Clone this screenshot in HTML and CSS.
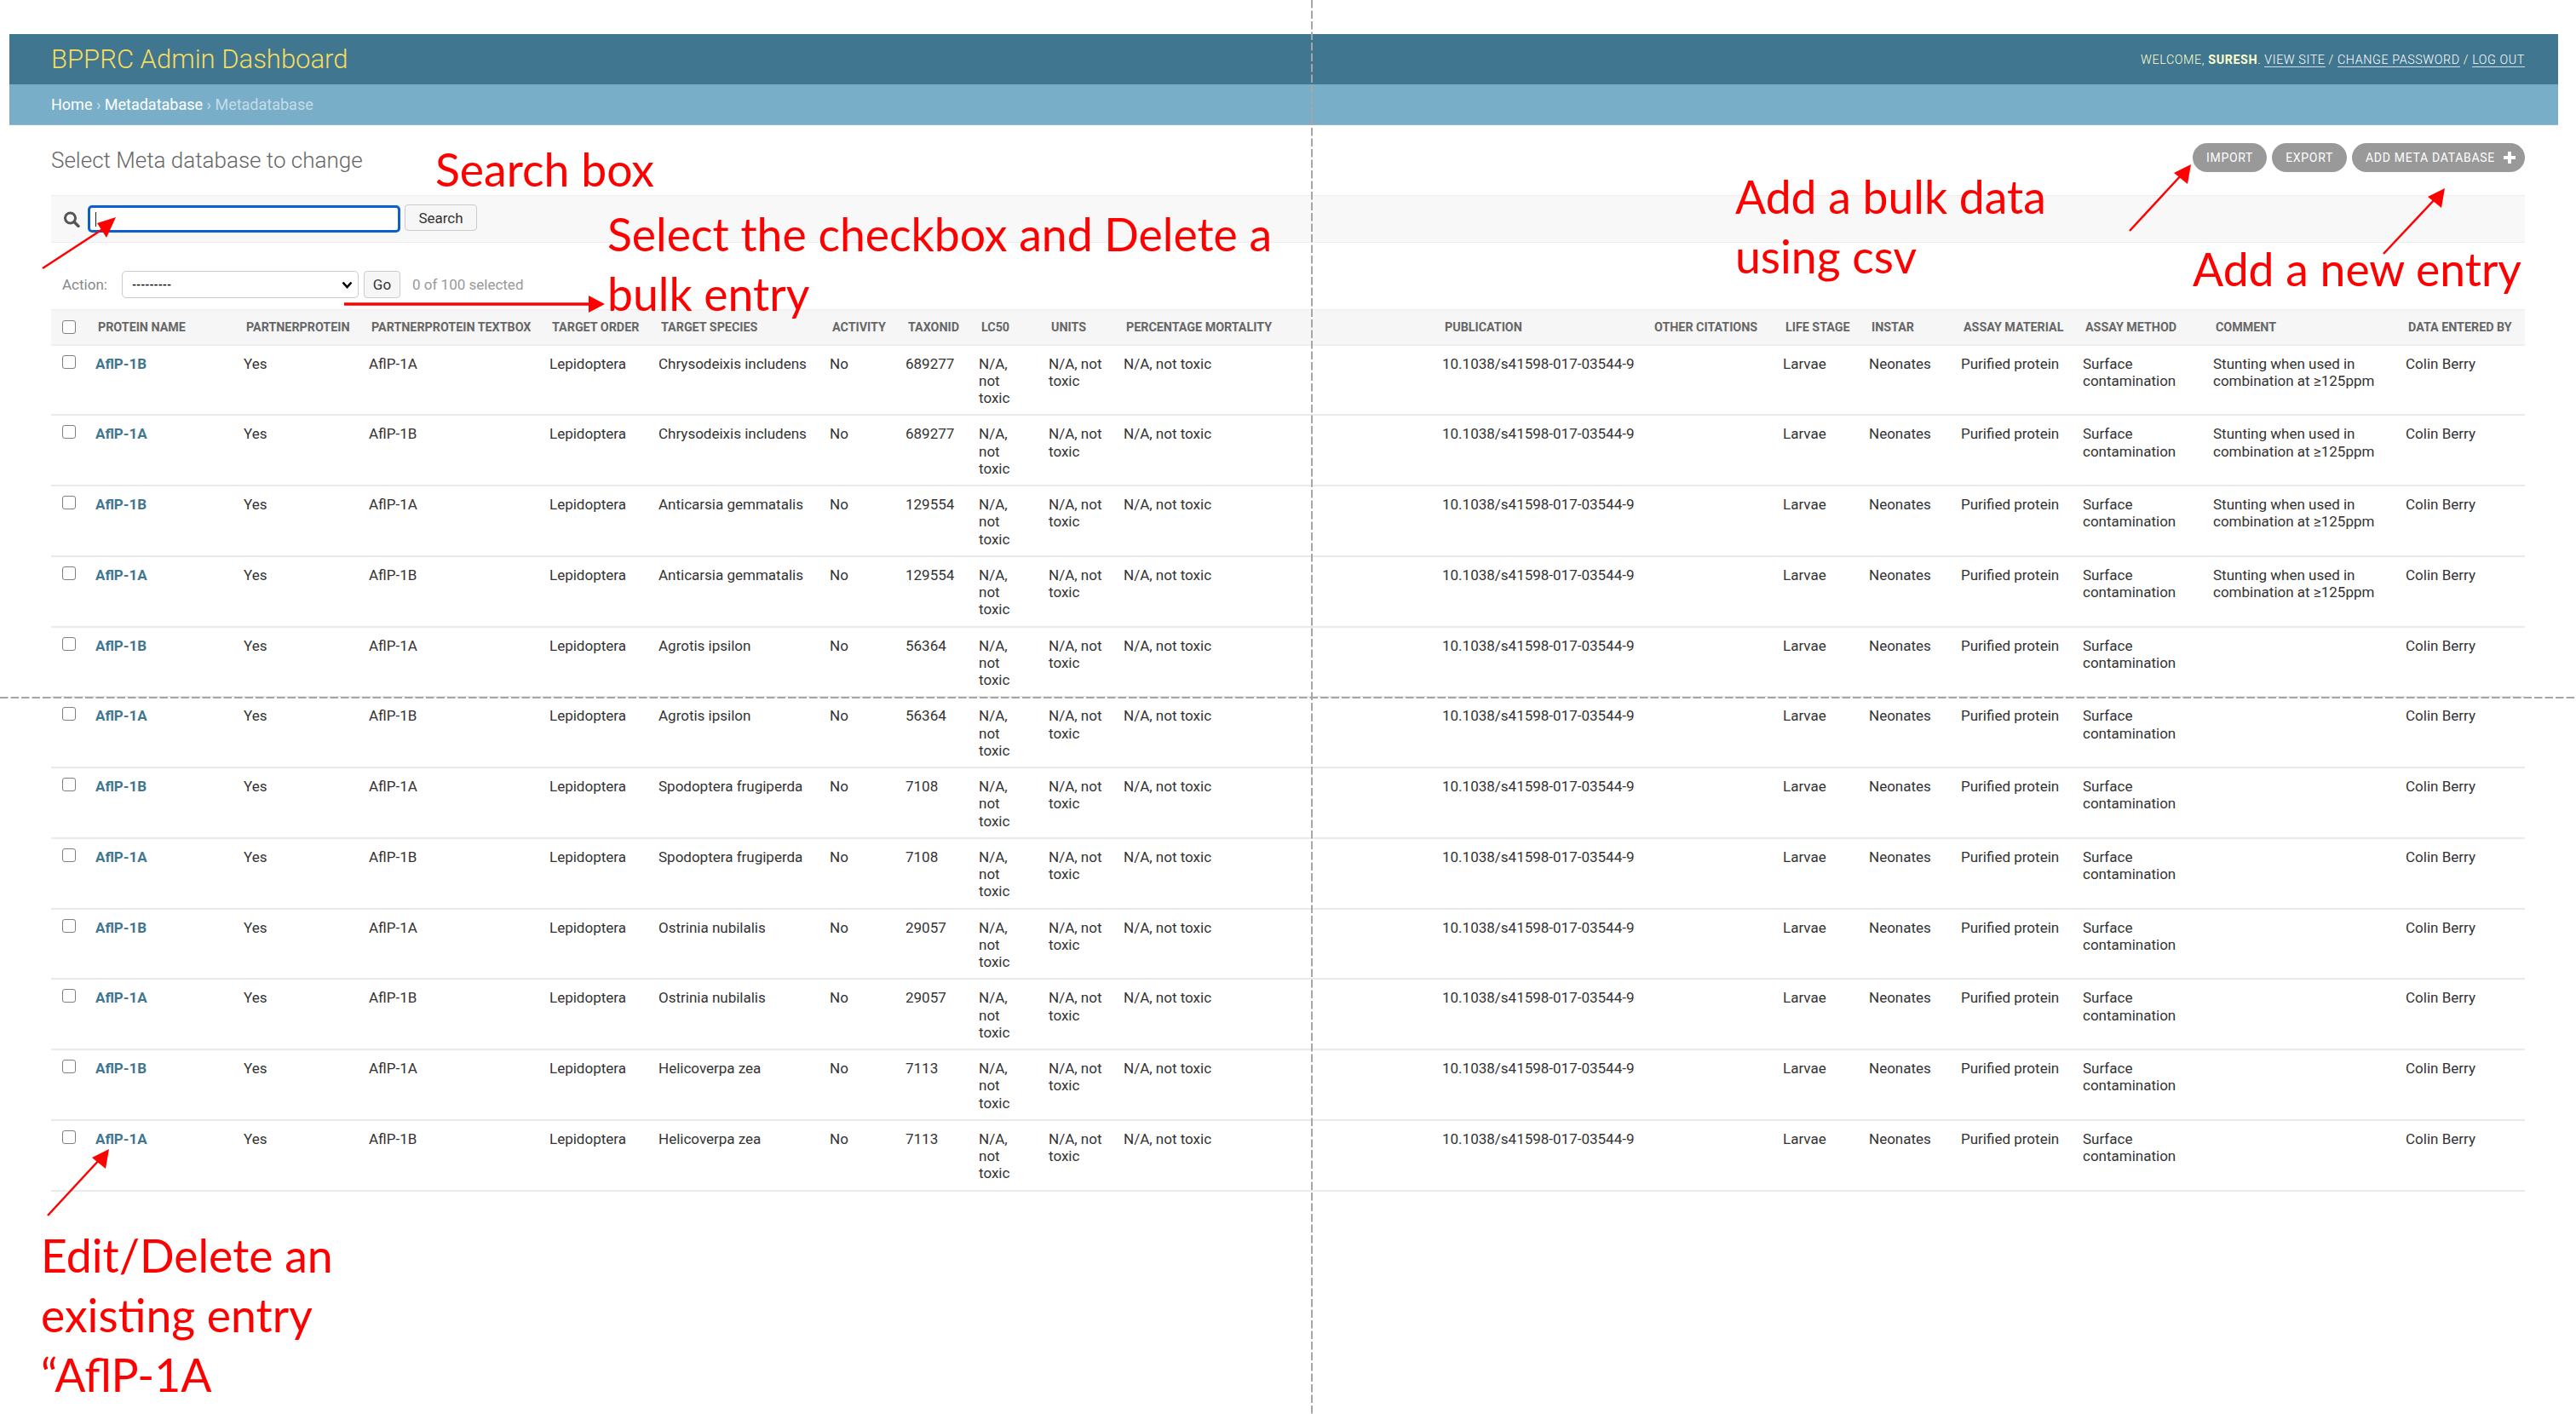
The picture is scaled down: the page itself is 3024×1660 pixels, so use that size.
FILE: index.html
```html
<!DOCTYPE html>
<html lang="en">
<head>
  <meta charset="UTF-8" />
  <title>Select Meta database to change | BPPRC Admin Dashboard</title>
  <link rel="stylesheet" href="styles.css">
</head>
<body>
  <div class="page">
    <div class="header">
      <div class="branding">BPPRC Admin Dashboard</div>
      <div class="user-tools">
        Welcome, <strong>Suresh</strong>. <a href="#">View site</a> / <a href="#">Change password</a> / <a href="#">Log out</a>
      </div>
    </div>
    <div class="breadcrumbs">
      <a href="#">Home</a> <span class="sep">›</span> <a href="#">Metadatabase</a> <span class="sep">›</span> Metadatabase
    </div>

    <div class="content">
      <div class="title-row">
        <h1>Select Meta database to change</h1>
        <ul class="object-tools">
          <li><a href="#">Import</a></li>
          <li><a href="#">Export</a></li>
          <li>
            <a href="#" class="addlink">Add meta database
              <svg class="plus" width="14" height="14" viewBox="0 0 14 14"><path d="M5 0h4v5h5v4H9v5H5V9H0V5h5z" fill="#fff"/></svg>
            </a>
          </li>
        </ul>
      </div>

      <div class="toolbar">
        <svg class="search-icon" width="20" height="19" viewBox="0 0 20 19">
          <circle cx="8.5" cy="8" r="6" fill="none" stroke="#555" stroke-width="3"/>
          <path d="M13 12.5l5 5" stroke="#555" stroke-width="3.4" stroke-linecap="round"/>
        </svg>
        <div class="search-input"><span class="caret"></span></div>
        <button class="btn search-btn">Search</button>
      </div>

      <div class="actions">
        <label class="action-label">Action:</label>
        <div class="action-select">
          <span>---------</span>
          <svg width="13" height="9" viewBox="0 0 13 9"><path d="M1.5 1.5l5 5.5 5-5.5" fill="none" stroke="#000" stroke-width="2.6"/></svg>
        </div>
        <button class="btn go-btn">Go</button>
        <span class="action-counter">0 of 100 selected</span>
      </div>

      <table class="result-list">
        <colgroup>
          <col class="c-check"><col class="c-name"><col class="c-partner"><col class="c-textbox"><col class="c-order">
          <col class="c-species"><col class="c-activity"><col class="c-taxon"><col class="c-lc50"><col class="c-units">
          <col class="c-mortality"><col class="c-pub"><col class="c-other"><col class="c-stage"><col class="c-instar">
          <col class="c-material"><col class="c-method"><col class="c-comment"><col class="c-by">
        </colgroup>
        <thead>
          <tr>
            <th><input type="checkbox"></th><th>Protein name</th><th>Partnerprotein</th><th>Partnerprotein textbox</th><th>Target order</th>
            <th>Target species</th><th>Activity</th><th>Taxonid</th><th>LC50</th><th>Units</th>
            <th>Percentage mortality</th><th>Publication</th><th>Other citations</th><th>Life stage</th><th>Instar</th>
            <th>Assay material</th><th>Assay method</th><th>Comment</th><th>Data entered by</th>
          </tr>
        </thead>
        <tbody>
          <tr><td><input type="checkbox"></td><td><a href="#">AflP-1B</a></td><td>Yes</td><td>AflP-1A</td><td>Lepidoptera</td><td>Chrysodeixis includens</td><td>No</td><td>689277</td><td>N/A, not toxic</td><td>N/A, not toxic</td><td>N/A, not toxic</td><td class="doi">10.1038/s41598-017-03544-9</td><td></td><td>Larvae</td><td>Neonates</td><td>Purified protein</td><td>Surface contamination</td><td>Stunting when used in combination at ≥125ppm</td><td>Colin Berry</td></tr>
          <tr><td><input type="checkbox"></td><td><a href="#">AflP-1A</a></td><td>Yes</td><td>AflP-1B</td><td>Lepidoptera</td><td>Chrysodeixis includens</td><td>No</td><td>689277</td><td>N/A, not toxic</td><td>N/A, not toxic</td><td>N/A, not toxic</td><td class="doi">10.1038/s41598-017-03544-9</td><td></td><td>Larvae</td><td>Neonates</td><td>Purified protein</td><td>Surface contamination</td><td>Stunting when used in combination at ≥125ppm</td><td>Colin Berry</td></tr>
          <tr><td><input type="checkbox"></td><td><a href="#">AflP-1B</a></td><td>Yes</td><td>AflP-1A</td><td>Lepidoptera</td><td>Anticarsia gemmatalis</td><td>No</td><td>129554</td><td>N/A, not toxic</td><td>N/A, not toxic</td><td>N/A, not toxic</td><td class="doi">10.1038/s41598-017-03544-9</td><td></td><td>Larvae</td><td>Neonates</td><td>Purified protein</td><td>Surface contamination</td><td>Stunting when used in combination at ≥125ppm</td><td>Colin Berry</td></tr>
          <tr><td><input type="checkbox"></td><td><a href="#">AflP-1A</a></td><td>Yes</td><td>AflP-1B</td><td>Lepidoptera</td><td>Anticarsia gemmatalis</td><td>No</td><td>129554</td><td>N/A, not toxic</td><td>N/A, not toxic</td><td>N/A, not toxic</td><td class="doi">10.1038/s41598-017-03544-9</td><td></td><td>Larvae</td><td>Neonates</td><td>Purified protein</td><td>Surface contamination</td><td>Stunting when used in combination at ≥125ppm</td><td>Colin Berry</td></tr>
          <tr><td><input type="checkbox"></td><td><a href="#">AflP-1B</a></td><td>Yes</td><td>AflP-1A</td><td>Lepidoptera</td><td>Agrotis ipsilon</td><td>No</td><td>56364</td><td>N/A, not toxic</td><td>N/A, not toxic</td><td>N/A, not toxic</td><td class="doi">10.1038/s41598-017-03544-9</td><td></td><td>Larvae</td><td>Neonates</td><td>Purified protein</td><td>Surface contamination</td><td></td><td>Colin Berry</td></tr>
          <tr><td><input type="checkbox"></td><td><a href="#">AflP-1A</a></td><td>Yes</td><td>AflP-1B</td><td>Lepidoptera</td><td>Agrotis ipsilon</td><td>No</td><td>56364</td><td>N/A, not toxic</td><td>N/A, not toxic</td><td>N/A, not toxic</td><td class="doi">10.1038/s41598-017-03544-9</td><td></td><td>Larvae</td><td>Neonates</td><td>Purified protein</td><td>Surface contamination</td><td></td><td>Colin Berry</td></tr>
          <tr><td><input type="checkbox"></td><td><a href="#">AflP-1B</a></td><td>Yes</td><td>AflP-1A</td><td>Lepidoptera</td><td>Spodoptera frugiperda</td><td>No</td><td>7108</td><td>N/A, not toxic</td><td>N/A, not toxic</td><td>N/A, not toxic</td><td class="doi">10.1038/s41598-017-03544-9</td><td></td><td>Larvae</td><td>Neonates</td><td>Purified protein</td><td>Surface contamination</td><td></td><td>Colin Berry</td></tr>
          <tr><td><input type="checkbox"></td><td><a href="#">AflP-1A</a></td><td>Yes</td><td>AflP-1B</td><td>Lepidoptera</td><td>Spodoptera frugiperda</td><td>No</td><td>7108</td><td>N/A, not toxic</td><td>N/A, not toxic</td><td>N/A, not toxic</td><td class="doi">10.1038/s41598-017-03544-9</td><td></td><td>Larvae</td><td>Neonates</td><td>Purified protein</td><td>Surface contamination</td><td></td><td>Colin Berry</td></tr>
          <tr><td><input type="checkbox"></td><td><a href="#">AflP-1B</a></td><td>Yes</td><td>AflP-1A</td><td>Lepidoptera</td><td>Ostrinia nubilalis</td><td>No</td><td>29057</td><td>N/A, not toxic</td><td>N/A, not toxic</td><td>N/A, not toxic</td><td class="doi">10.1038/s41598-017-03544-9</td><td></td><td>Larvae</td><td>Neonates</td><td>Purified protein</td><td>Surface contamination</td><td></td><td>Colin Berry</td></tr>
          <tr><td><input type="checkbox"></td><td><a href="#">AflP-1A</a></td><td>Yes</td><td>AflP-1B</td><td>Lepidoptera</td><td>Ostrinia nubilalis</td><td>No</td><td>29057</td><td>N/A, not toxic</td><td>N/A, not toxic</td><td>N/A, not toxic</td><td class="doi">10.1038/s41598-017-03544-9</td><td></td><td>Larvae</td><td>Neonates</td><td>Purified protein</td><td>Surface contamination</td><td></td><td>Colin Berry</td></tr>
          <tr><td><input type="checkbox"></td><td><a href="#">AflP-1B</a></td><td>Yes</td><td>AflP-1A</td><td>Lepidoptera</td><td>Helicoverpa zea</td><td>No</td><td>7113</td><td>N/A, not toxic</td><td>N/A, not toxic</td><td>N/A, not toxic</td><td class="doi">10.1038/s41598-017-03544-9</td><td></td><td>Larvae</td><td>Neonates</td><td>Purified protein</td><td>Surface contamination</td><td></td><td>Colin Berry</td></tr>
          <tr><td><input type="checkbox"></td><td><a href="#">AflP-1A</a></td><td>Yes</td><td>AflP-1B</td><td>Lepidoptera</td><td>Helicoverpa zea</td><td>No</td><td>7113</td><td>N/A, not toxic</td><td>N/A, not toxic</td><td>N/A, not toxic</td><td class="doi">10.1038/s41598-017-03544-9</td><td></td><td>Larvae</td><td>Neonates</td><td>Purified protein</td><td>Surface contamination</td><td></td><td>Colin Berry</td></tr>
        </tbody>
      </table>
    </div>
  </div>

  <!-- red notes and guides drawn over the screenshot -->
  <svg class="overlay" width="3024" height="1660" viewBox="0 0 3024 1660">
    <g stroke="#a6a6a6" stroke-width="2" stroke-dasharray="9.5 3" fill="none">
      <line x1="1540" y1="0" x2="1540" y2="1660"/>
      <line x1="0" y1="819" x2="3024" y2="819"/>
    </g>
    <g stroke="#f00" stroke-width="2.5" fill="none">
      <line x1="50" y1="315" x2="122" y2="268"/>
      <line x1="2500" y1="271" x2="2562" y2="204"/>
      <line x1="2798" y1="298" x2="2860" y2="232"/>
      <line x1="56" y1="1427" x2="118" y2="1360"/>
    </g>
    <line x1="404" y1="357" x2="695" y2="357" stroke="#f00" stroke-width="3.5"/>
    <g fill="#f00">
      <path d="M136 255l-22 7 11 17z"/>
      <path d="M710 357l-19-10v20z"/>
      <path d="M2572 193l-20 10 16 13z"/>
      <path d="M2870 221l-20 10 16 13z"/>
      <path d="M128 1349l-20 10 16 13z"/>
    </g>
  </svg>
  <div class="note note-search">Search box</div>
  <div class="note note-select">Select the checkbox and Delete a<br>bulk entry</div>
  <div class="note note-import">Add a bulk data<br>using csv</div>
  <div class="note note-add">Add a new entry</div>
  <div class="note note-edit">Edit/Delete an<br>existing entry<br>“AflP-1A</div>
</body>
</html>
```

FILE: styles.css
```css
:root {
  --primary: #417690;
  --secondary: #79aec8;
  --accent: #f5dd5d;
  --line: #eaeaea;
  --note: #ff0000;
}
html, body { margin: 0; padding: 0; background: #fff; }
body {
  position: relative;
  width: 3024px;
  height: 1660px;
  overflow: hidden;
  font-family: Roboto, "Liberation Sans", sans-serif;
  font-size: 17px;
  color: #333;
}
a { color: inherit; text-decoration: none; }
.page { padding: 40px 21px 0 11px; }

.header {
  display: flex;
  justify-content: space-between;
  align-items: center;
  height: 59px;
  padding: 0 39px 0 49px;
  background: var(--primary);
  box-sizing: border-box;
}
.branding { font-size: 31px; font-weight: 300; color: var(--accent); }
.user-tools {
  font-size: 14.3px;
  font-weight: 300;
  letter-spacing: .6px;
  text-transform: uppercase;
  color: #ffc;
}
.user-tools strong { font-weight: 700; }
.user-tools a { color: #fff; border-bottom: 1px solid #cde; }

.breadcrumbs {
  height: 48px;
  line-height: 47px;
  padding-left: 49px;
  box-sizing: border-box;
  background: var(--secondary);
  font-size: 18px;
  color: #c4dce8;
  border-bottom: 1px solid #8fb9d0;
}
.breadcrumbs a { color: #fff; }
.breadcrumbs .sep { color: #c4dce8; }

.content { padding: 0 39px 0 49px; }
.title-row {
  display: flex;
  justify-content: space-between;
  height: 82px;
  padding-top: 21px;
  box-sizing: border-box;
}
h1 {
  margin: 0;
  padding-top: 4px;
  font-size: 26px;
  line-height: 32px;
  font-weight: 300;
  color: #666;
}
.object-tools { display: flex; gap: 6px; margin: 0; padding: 0; list-style: none; height: 34px; }
.object-tools a {
  display: flex;
  align-items: center;
  height: 34px;
  padding: 0 16px;
  border-radius: 17px;
  background: #999;
  color: #fff;
  font-size: 14px;
  letter-spacing: .7px;
  text-transform: uppercase;
}
.object-tools .addlink { padding-right: 11px; }
.plus { margin-left: 10px; }

.toolbar {
  display: flex;
  align-items: center;
  height: 56px;
  box-sizing: border-box;
  padding: 0 0 0 14px;
  background: #f8f8f8;
  border-top: 1px solid #eee;
  border-bottom: 1px solid #eee;
}
.search-icon { margin-right: 9px; }
.search-input {
  display: flex;
  align-items: center;
  width: 367px;
  height: 32px;
  box-sizing: border-box;
  padding-left: 6px;
  background: #fff;
  border: 3px solid #0b5fcf;
  border-radius: 5px;
}
.caret { width: 1px; height: 17px; background: #222; }
.btn {
  box-sizing: border-box;
  padding: 0;
  background: #f6f6f6;
  border: 1px solid #ccc;
  border-radius: 4px;
  color: #333;
  font-family: inherit;
  font-size: 17px;
}
.search-btn { width: 85px; height: 31px; margin-left: 5px; margin-bottom: 3px; }

.actions {
  display: flex;
  align-items: center;
  height: 78px;
  padding: 20px 0 0 13px;
  box-sizing: border-box;
}
.action-label { width: 70px; color: #888; font-size: 17px; }
.action-select {
  display: flex;
  justify-content: space-between;
  align-items: center;
  width: 278px;
  height: 32px;
  box-sizing: border-box;
  padding: 0 6px 0 11px;
  background: #fff;
  border: 1px solid #ccc;
  border-radius: 5px;
  color: #000;
  font-size: 13px;
  font-weight: 700;
}
.go-btn { width: 43px; height: 32px; margin-left: 6px; }
.action-counter { margin-left: 14px; color: #999; font-size: 17px; }

.result-list {
  width: 2904px;
  table-layout: fixed;
  border-collapse: collapse;
}
.c-check { width: 39px; }
.c-name { width: 174px; }
.c-partner { width: 147px; }
.c-textbox { width: 212px; }
.c-order { width: 128px; }
.c-species { width: 201px; }
.c-activity { width: 89px; }
.c-taxon { width: 86px; }
.c-lc50 { width: 82px; }
.c-units { width: 88px; }
.c-mortality { width: 374px; }
.c-pub { width: 246px; }
.c-other { width: 154px; }
.c-stage { width: 101px; }
.c-instar { width: 108px; }
.c-material { width: 143px; }
.c-method { width: 153px; }
.c-comment { width: 226px; }
.c-by { width: 153px; }

.result-list th {
  height: 41px;
  padding: 0 0 0 16px;
  background: #f6f6f6;
  border-top: 1px solid #eee;
  border-bottom: 2px solid #eee;
  box-sizing: border-box;
  text-align: left;
  white-space: nowrap;
  color: #666;
  font-size: 14.3px;
  font-weight: 700;
  text-transform: uppercase;
}
.result-list th:first-child, .result-list td:first-child { padding-left: 13px; padding-right: 0; }
.result-list td {
  height: 82.75px;
  padding: 11px 12px 0 13px;
  box-sizing: border-box;
  border-bottom: 2px solid var(--line);
  vertical-align: top;
  line-height: 20.3px;
}
.result-list td.doi { white-space: nowrap; }
.result-list td a { color: var(--primary); font-weight: 700; }
input[type="checkbox"] {
  appearance: none;
  display: block;
  width: 16px;
  height: 16px;
  margin: 0;
  box-sizing: border-box;
  background: #fff;
  border: 1px solid #808080;
  border-radius: 3px;
}

.overlay { position: absolute; left: 0; top: 0; pointer-events: none; }
.note {
  position: absolute;
  color: var(--note);
  font-family: Lato, "Open Sans", sans-serif;
  font-size: 53.5px;
  line-height: 70px;
  white-space: nowrap;
}
.note-search { left: 511px; top: 163px; }
.note-select { left: 713px; top: 239px; }
.note-import { left: 2037px; top: 195px; }
.note-add { left: 2574px; top: 280px; }
.note-edit { left: 48px; top: 1438px; }
```
